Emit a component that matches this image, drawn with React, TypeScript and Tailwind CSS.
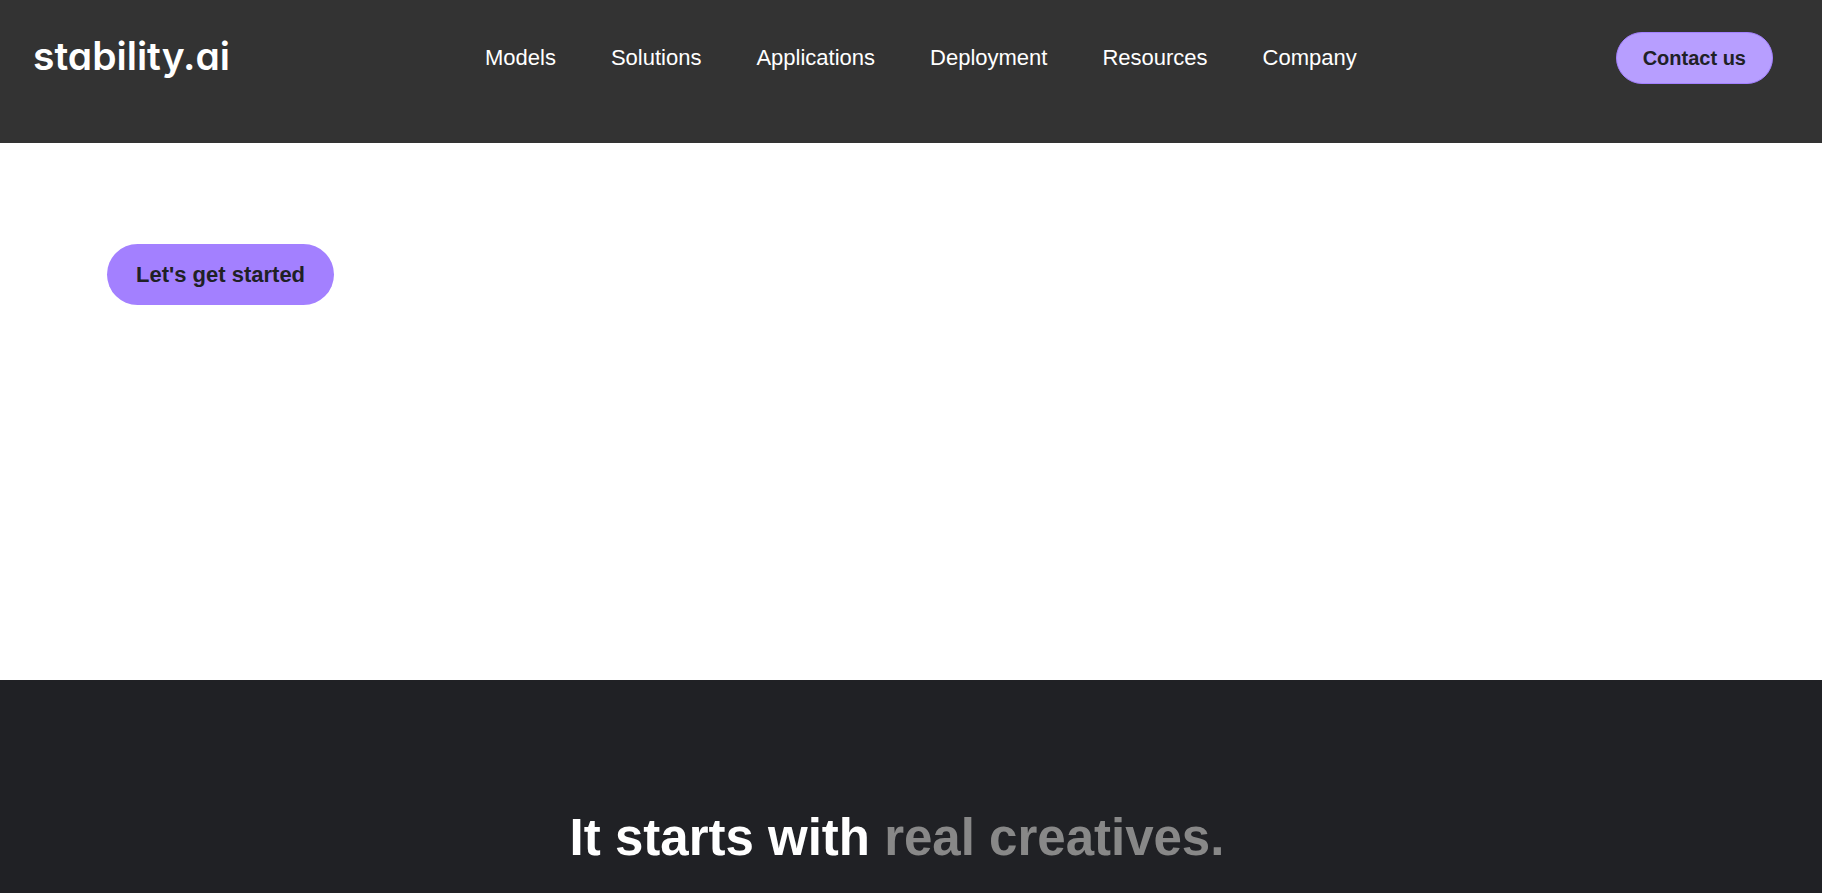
const links = ["Models", "Solutions", "Applications", "Deployment", "Resources", "Company"]

export default function App() {
  return (
    <div className="flex min-h-screen flex-col bg-white font-['Liberation_Sans',Arial,sans-serif]">
      <header className="bg-[#333333] pb-[59px] pl-[33px] pr-[49px] pt-8">
        <div className="flex items-start justify-between">
          <a
            href="#"
            className="font-['Inter',sans-serif] text-[39px] font-semibold leading-[48px] text-white [font-feature-settings:'cv11']"
          >
            stability.ai
          </a>
          <nav className="flex items-center gap-[55px] pr-1">
            {links.map((link) => (
              <a key={link} href="#" className="text-[22px] leading-[52px] text-white">
                {link}
              </a>
            ))}
          </nav>
          <button className="rounded-full border border-[#a380ff] bg-[#b79eff] px-[26px] text-xl font-bold leading-[50px] text-[#202125]">
            Contact us
          </button>
        </div>
      </header>
      <main className="flex grow flex-col">
        <section className="px-[107px] pb-[375px] pt-[101px]">
          <button className="rounded-full bg-[#a380ff] px-[29px] text-[22px] font-bold leading-[61px] text-[#202125]">
            Let's get started
          </button>
        </section>
        <section className="grow bg-[#202125] pr-7 pt-32 text-center">
          <h2 className="text-[51px] font-bold leading-[60px] text-white">
            It starts with <span className="text-[#888888]">real creatives.</span>
          </h2>
        </section>
      </main>
    </div>
  )
}
